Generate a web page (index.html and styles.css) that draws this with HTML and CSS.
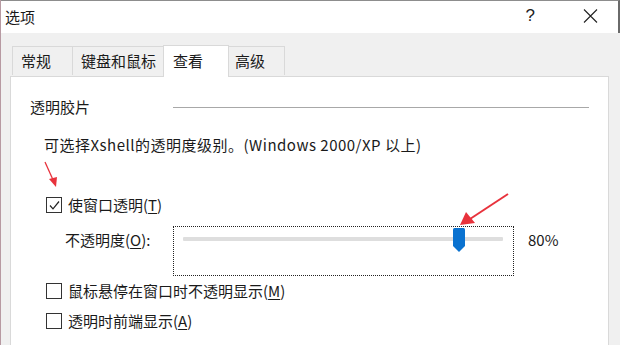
FILE: index.html
```html
<!DOCTYPE html>
<html lang="zh-CN">
<head>
<meta charset="utf-8">
<title>选项</title>
<link rel="stylesheet" href="styles.css">
</head>
<body>
<div class="window">
  <div class="titlebar">
    <span class="title">选项</span>
    <span class="help">?</span>
    <svg class="close" width="15" height="14" viewBox="0 0 15 14"><path d="M1 0.5 L14 13.5 M14 0.5 L1 13.5" stroke="#222" stroke-width="1.1" fill="none"/></svg>
  </div>
  <div class="body">
    <div class="tabs">
      <div class="tab">常规</div>
      <div class="tab">键盘和鼠标</div>
      <div class="tab active">查看</div>
      <div class="tab">高级</div>
    </div>
    <div class="panel">
      <div class="group-head"><span>透明胶片</span><div class="rule"></div></div>
      <p class="desc">可选择Xshell的透明度级别。(Windows 2000/XP 以上)</p>
      <div class="check first">
        <span class="box"><svg width="13" height="13" viewBox="0 0 13 13"><path d="M2 6.5 L5 9.8 L11 2.5" stroke="#222" stroke-width="1.2" fill="none"/></svg></span>
        <span>使窗口透明(<u>T</u>)</span>
      </div>
      <div class="opacity-row">
        <span class="olabel">不透明度(<u>O</u>):</span>
        <div class="slider-box">
          <div class="track"></div>
          <svg class="thumb" width="12" height="24" viewBox="0 0 12 24"><path d="M0 1.5 Q0 0 1.5 0 H10.5 Q12 0 12 1.5 V18 L6 24 L0 18 Z" fill="#0a72d0"/></svg>
        </div>
        <span class="pct">80%</span>
      </div>
      <div class="check second">
        <span class="box"></span>
        <span>鼠标悬停在窗口时不透明显示(<u>M</u>)</span>
      </div>
      <div class="check third">
        <span class="box"></span>
        <span>透明时前端显示(<u>A</u>)</span>
      </div>
    </div>
  </div>
  <svg class="arrow arrow-a" width="20" height="30" viewBox="0 0 20 30"><path d="M2 2 L11 22" stroke="#e8323c" stroke-width="1.3" fill="none"/><path d="M13 27 L6 19 L14 17 Z" fill="#e8323c"/></svg>
  <svg class="arrow arrow-b" width="52" height="36" viewBox="0 0 52 36"><path d="M50 2 L12 27" stroke="#e8323c" stroke-width="2" fill="none"/><path d="M2 33 L8 20 L17 31 Z" fill="#e8323c"/></svg>
</div>
</body>
</html>
```
FILE: styles.css
```css
* { box-sizing: border-box; }
html, body { margin: 0; padding: 0; }
body {
  width: 620px;
  height: 345px;
  overflow: hidden;
  background: #f0f0f0;
  font-family: "Noto Sans CJK SC", "Liberation Sans", sans-serif;
  font-size: 15px;
  color: #1a1a1a;
}
.window {
  position: relative;
  width: 620px;
  height: 345px;
  border-left: 1px solid #b79aa2;
  background: #f0f0f0;
  overflow: hidden;
}
.titlebar {
  height: 33px;
  background: #fff;
  border-top: 1px solid #8d8d8d;
  border-right: 2px solid #6a6a6a;
  display: flex;
  align-items: center;
  padding-left: 4px;
}
.title { font-size: 15px; line-height: 20px; flex: 1; margin-top: -1px; }
.help { font-family: "Liberation Sans", sans-serif; font-size: 17px; line-height: 20px; margin-right: 48px; margin-top: -2px; color: #222; }
.close { margin-right: 20px; margin-top: -2px; }
.body {
  padding: 12px 11px 0 9px;
}
.tabs {
  display: flex;
  align-items: flex-end;
  height: 31px;
  padding-left: 2px;
  position: relative;
  z-index: 1;
}
.tab {
  height: 29px;
  padding: 0 0 0 8px;
  background: #f0f0f0;
  border: 1px solid #d9d9d9;
  border-bottom: none;
  line-height: 28px;
  margin-bottom: 1px;
  margin-right: -1px;
  white-space: nowrap;
}
.tab:nth-child(1) { width: 61px; }
.tab:nth-child(2) { width: 92px; }
.tab:nth-child(3) { width: 66px; padding-left: 9px; }
.tab:nth-child(4) { width: 57px; padding-left: 6px; }
.tab.active {
  height: 32px;
  background: #fff;
  margin-bottom: -1px;
  line-height: 29px;
}
.panel {
  height: 280px;
  background: #fff;
  border: 1px solid #d9d9d9;
  border-bottom: none;
  padding: 20px 19px 0 19px;
}
.group-head {
  display: flex;
  align-items: center;
  height: 20px;
  line-height: 20px;
}
.group-head span { width: 143px; }
.rule { flex: 1; height: 1px; background: #a8a8a8; }
.desc {
  margin: 18px 0 0 14px;
  line-height: 20px;
  font-size: 15px;
  letter-spacing: 0.5px;
  white-space: nowrap;
}
.check {
  display: flex;
  align-items: center;
  height: 20px;
  line-height: 20px;
  margin-left: 16px;
}
.check.first { margin-top: 40px; }
.check.second { margin-top: 5px; }
.check.third { margin-top: 10px; }
.box {
  width: 16px;
  height: 16px;
  border: 1px solid #333;
  margin-right: 6px;
  display: flex;
  align-items: center;
  justify-content: center;
  background: #fff;
}
.opacity-row {
  display: flex;
  align-items: flex-start;
  margin: 11px 0 0 35px;
}
.olabel { width: 108px; line-height: 20px; margin-top: 4px; }
.slider-box {
  position: relative;
  width: 341px;
  height: 50px;
  border: 1px dotted #222;
  padding: 10px 10px 0 9px;
}
.track {
  height: 4px;
  background: #dedede;
  border-radius: 1px;
}
.thumb {
  position: absolute;
  left: 279px;
  top: 1px;
}
.pct { margin: 4px 0 0 14px; line-height: 20px; }
u { text-decoration: underline; text-underline-offset: 2px; }
.arrow { position: absolute; }
.arrow-a { left: 42px; top: 160px; }
.arrow-b { left: 457px; top: 192px; }
```
